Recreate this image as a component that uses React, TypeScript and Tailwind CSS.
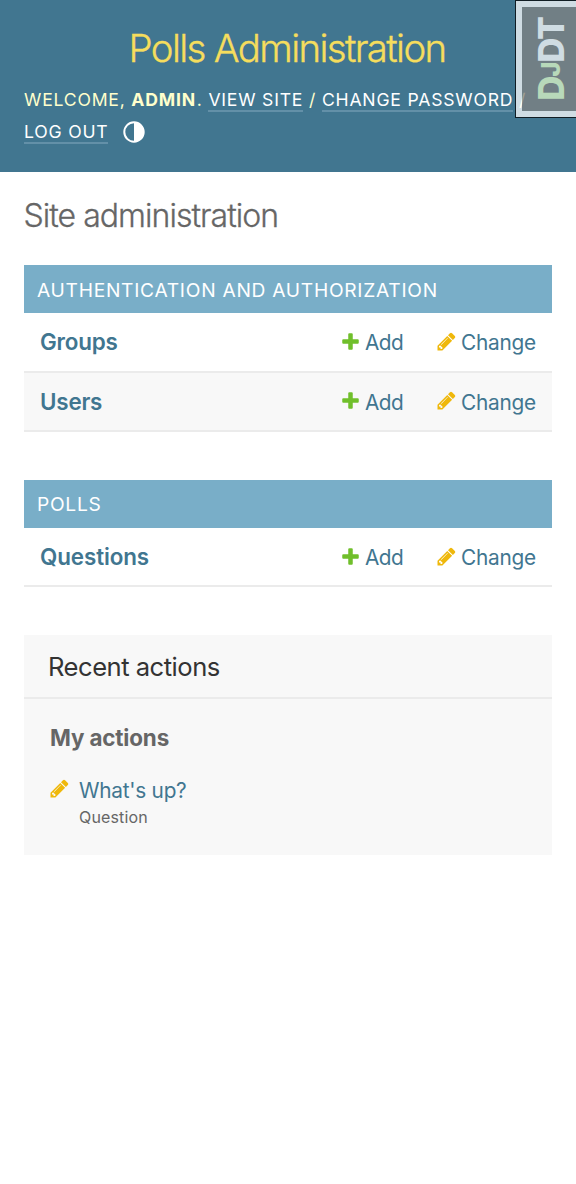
import React from "react";

function AddIcon() {
  return (
    <svg viewBox="0 0 1792 1792" className="-mt-[0.5px] h-[21px] w-[21px] shrink-0" fill="#70bf2b">
      <path d="M1600 796v192q0 40-28 68t-68 28h-416v416q0 40-28 68t-68 28h-192q-40 0-68-28t-28-68v-416h-416q-40 0-68-28t-28-68v-192q0-40 28-68t68-28h416v-416q0-40 28-68t68-28h192q40 0 68 28t28 68v416h416q40 0 68 28t28 68z" />
    </svg>
  );
}

function ChangeIcon() {
  return (
    <svg viewBox="0 0 1792 1792" className="-mt-[0.5px] h-[21px] w-[21px] shrink-0" fill="#efb80b">
      <path d="M491 1536l91-91-235-235-91 91v107h128v128h107zm523-928q0-22-22-22-10 0-17 7l-542 542q-7 7-7 17 0 22 22 22 10 0 17-7l542-542q7-7 7-17zm-54-192l416 416-832 832h-416v-416zm683 96q0 53-37 90l-166 166-416-416 166-165q36-38 90-38 53 0 91 38l235 234q37 39 37 91z" />
    </svg>
  );
}

function ModelRow({ name, track, shaded }: { name: string; track: string; shaded?: boolean }) {
  return (
    <div
      className={`flex h-[59.2px] items-center border-b-2 border-[#ebebeb] pl-4 text-[20.8px] text-[#417690] ${
        shaded ? "bg-[#f8f8f8]" : "bg-white"
      }`}
    >
      <a className={`flex-1 pt-[0.4px] text-[22.4px] font-semibold ${track}`}>{name}</a>
      <a className="flex h-[31px] w-[96px] items-center">
        <AddIcon />
        <span className="ml-[4px] pt-[2px] tracking-[-0.6px]">Add</span>
      </a>
      <a className="flex h-[31px] w-[116px] items-center">
        <ChangeIcon />
        <span className="ml-[4px] pt-[2px] tracking-[-0.25px]">Change</span>
      </a>
    </div>
  );
}

function Caption({ children }: { children: React.ReactNode }) {
  return (
    <h2 className="flex h-12 items-center bg-[#79aec8] pt-[1.6px] pl-[13px] text-[19.2px] tracking-[0.72px] text-white">
      {children}
    </h2>
  );
}

const toolLink = "border-b-2 border-[#6390a8] text-white";

export default function App() {
  return (
    <div className="relative min-h-[1184px] w-[576px] overflow-hidden bg-white font-['Inter',sans-serif]">
      <header className="h-[172px] bg-[#417690] px-6 pt-6 text-[#ffffcc]">
        <h1 className="-ml-[2px] h-12 text-center text-[38.4px] leading-[48px] font-light tracking-[-1.65px] whitespace-nowrap text-[#f5dd5d] [-webkit-text-stroke:0.35px_#f5dd5d]">
          Polls Administration
        </h1>
        <div className="mt-3 text-[17.6px] leading-8 tracking-[0.8px] whitespace-nowrap">
          <div>
            WELCOME, <strong className="mr-[0.8px] font-bold">ADMIN</strong>. <a className={toolLink}>VIEW SITE</a> /{" "}
            <a className={toolLink}>CHANGE PASSWORD</a> /
          </div>
          <div className="flex items-center">
            <span>
              <a className={toolLink}>LOG OUT</a>
            </span>
            <svg viewBox="0 0 22 22" className="ml-[15px] h-[22px] w-[22px]">
              <circle cx="11" cy="11" r="9.7" fill="none" stroke="#fff" strokeWidth="2" />
              <path d="M11 1a10 10 0 0 1 0 20z" fill="#fff" />
            </svg>
          </div>
        </div>
      </header>

      <aside className="absolute top-0 left-[515px] h-[118px] w-[70px] border-[1.6px] border-black bg-white opacity-75">
        <div className="h-full border-[6.4px] border-white bg-[#828282]">
          <div className="flex h-full items-center pl-[8px]">
            <div className="flex w-[42px] rotate-180 items-baseline text-[35px] leading-[42px] font-extrabold tracking-[-1.2px] text-white [writing-mode:vertical-rl]">
              <span className="text-[#e0fac8]">D</span>
              <span className="text-[26px] text-[#e0fac8]">J</span>
              <span>DT</span>
            </div>
          </div>
        </div>
      </aside>

      <main className="px-6">
        <h1 className="mt-6 -ml-[0.5px] h-10 text-[32px] leading-10 font-light tracking-[-0.97px] text-[#666] [-webkit-text-stroke:0.3px_#666]">
          Site administration
        </h1>
        <section className="mt-[29.4px]">
          <Caption>AUTHENTICATION AND AUTHORIZATION</Caption>
          <ModelRow name="Groups" track="tracking-[-0.2px]" />
          <ModelRow name="Users" track="tracking-[-0.2px]" shaded />
        </section>
        <section className="mt-[48px]">
          <Caption>POLLS</Caption>
          <ModelRow name="Questions" track="tracking-[-0.1px]" />
        </section>
        <section className="mt-[48px] h-[220px] bg-[#f8f8f8]">
          <h2 className="h-[64px] border-b-2 border-[#ebebeb] pl-6 text-[25.6px] leading-[63px] tracking-[-0.5px] text-[#333]">
            Recent actions
          </h2>
          <h3 className="mt-[23px] pl-[26px] text-[22.4px] leading-8 font-bold tracking-[-0.15px] text-[#666]">
            My actions
          </h3>
          <div className="mt-[22px] flex pl-[25px]">
            <span className="pt-[3px]">
              <ChangeIcon />
            </span>
            <div className="ml-[9px] pt-[1px]">
              <a className="block text-[20.8px] leading-[28px] tracking-[-0.25px] text-[#417690]">What's up?</a>
              <span className="block text-[16px] leading-[25px] tracking-[0.15px] text-[#666]">Question</span>
            </div>
          </div>
        </section>
      </main>
    </div>
  );
}
